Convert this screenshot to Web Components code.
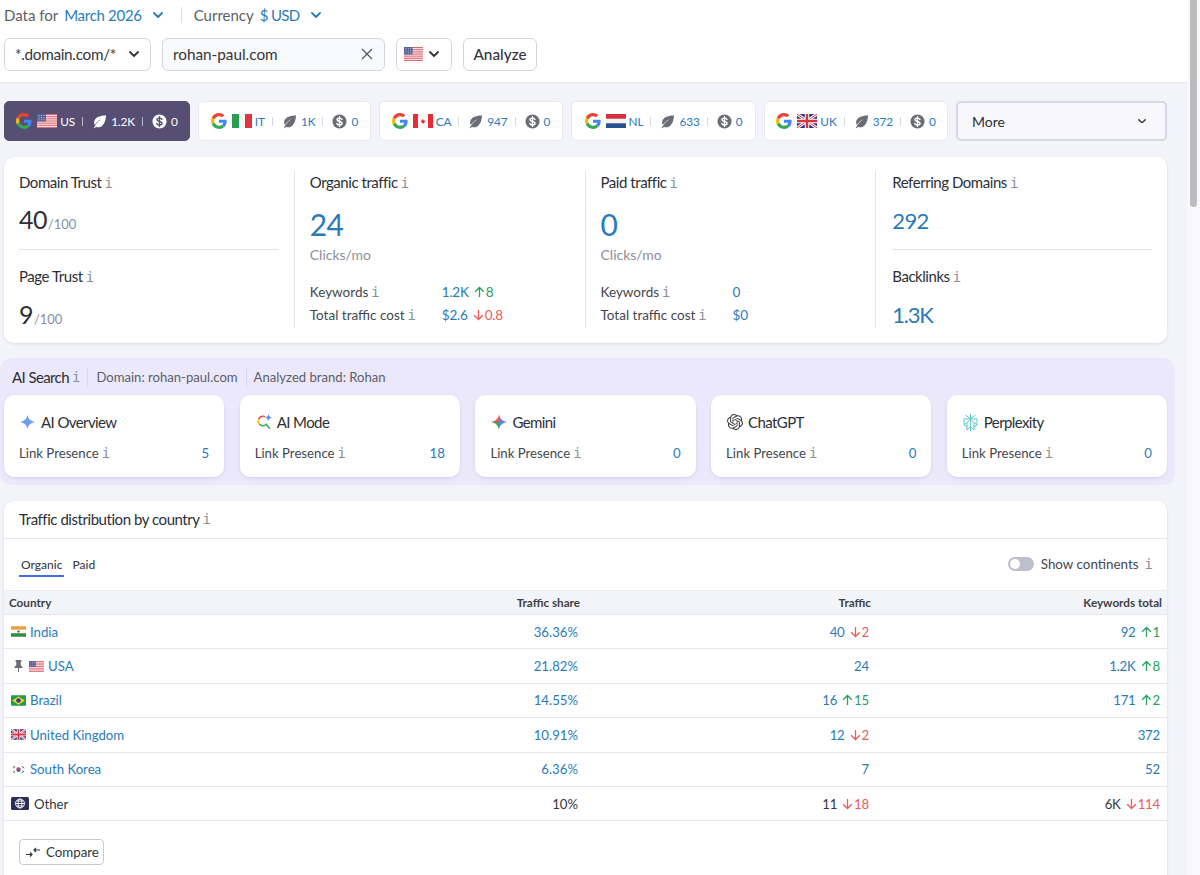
<!DOCTYPE html>
<html lang="en">
<head>
<meta charset="utf-8">
<title>Domain overview</title>
<style>
html,body{margin:0;padding:0;height:875px;overflow:hidden;background:#f3f4f9}
body{font-family:Lato,"Open Sans",sans-serif;color:#2c2f36}
</style>
</head>
<body>
<seo-app></seo-app>
<script>
const FLAGS = {
 us:`<svg viewBox="0 0 20 14" width="W" height="H" preserveAspectRatio="none"><rect width="20" height="14" fill="#f3f1f4"/><g fill="#e2656f"><rect width="20" height="1.1"/><rect y="2.15" width="20" height="1.1"/><rect y="4.3" width="20" height="1.1"/><rect y="6.45" width="20" height="1.1"/><rect y="8.6" width="20" height="1.1"/><rect y="10.75" width="20" height="1.1"/><rect y="12.9" width="20" height="1.1"/></g><rect width="9" height="7.5" fill="#5a6399"/><g fill="#cfd3e6"><circle cx="2" cy="1.6" r=".5"/><circle cx="4.5" cy="1.6" r=".5"/><circle cx="7" cy="1.6" r=".5"/><circle cx="2" cy="3.7" r=".5"/><circle cx="4.5" cy="3.7" r=".5"/><circle cx="7" cy="3.7" r=".5"/><circle cx="2" cy="5.8" r=".5"/><circle cx="4.5" cy="5.8" r=".5"/><circle cx="7" cy="5.8" r=".5"/></g></svg>`,
 it:`<svg viewBox="0 0 20 14" width="W" height="H"><rect width="7" height="14" fill="#2a9d55"/><rect x="7" width="6" height="14" fill="#f6f6f6"/><rect x="13" width="7" height="14" fill="#e0353f"/></svg>`,
 ca:`<svg viewBox="0 0 20 14" width="W" height="H"><rect width="20" height="14" fill="#f7f7f7"/><rect width="5" height="14" fill="#ea2a37"/><rect x="15" width="5" height="14" fill="#ea2a37"/><path d="M10 3l.9 1.8 1-.4-.4 2.4 1.4-.8.4.9 1.1-.2-.4 1.5.5.4-2.6 1.8.2 1H10.400v1.400h-.8V10.900H7.900l.2-1-2.600-1.800.5-.4-.4-1.500 1.100.2.400-.9 1.400.8-.4-2.400 1 .4z" fill="#ea2a37" transform="translate(5 3.500) scale(.5)"/></svg>`,
 nl:`<svg viewBox="0 0 20 14" width="W" height="H"><rect width="20" height="14" fill="#f4f4f6"/><rect width="20" height="4.700" fill="#d2303f"/><rect y="9.300" width="20" height="4.700" fill="#27508f"/></svg>`,
 uk:`<svg viewBox="0 0 20 14" width="W" height="H"><rect width="20" height="14" fill="#29367f"/><path d="M0 0l20 14M20 0L0 14" stroke="#fff" stroke-width="3"/><path d="M0 0l20 14M20 0L0 14" stroke="#d8323f" stroke-width="1"/><path d="M10 0v14M0 7h20" stroke="#fff" stroke-width="4.500"/><path d="M10 0v14M0 7h20" stroke="#d8323f" stroke-width="2.400"/></svg>`,
 in:`<svg viewBox="0 0 20 14" width="W" height="H"><rect width="20" height="4.700" fill="#f39b3c"/><rect y="4.700" width="20" height="4.600" fill="#fbfbfb"/><rect y="9.300" width="20" height="4.700" fill="#2c8f3c"/><circle cx="10" cy="7" r="1.500" fill="#3a4a8c"/></svg>`,
 br:`<svg viewBox="0 0 20 14" width="W" height="H"><rect width="20" height="14" rx="1" fill="#1f9c49"/><path d="M10 1.500L18.500 7 10 12.500 1.500 7z" fill="#f5d327"/><circle cx="10" cy="7" r="3.100" fill="#27408f"/></svg>`,
 kr:`<svg viewBox="0 0 20 14" width="W" height="H"><rect width="20" height="14" fill="#fff"/><path d="M7 7a3 3 0 0 1 6 0z" fill="#d8323f"/><path d="M7 7a3 3 0 0 0 6 0z" fill="#2d4a96"/><g stroke="#333" stroke-width=".9"><path d="M2.500 4.500l2-2.200M3.600 5.400l2-2.200M14.500 2.300l2 2.200M15.500 3.200l2 2.200M2.500 9.500l2 2.200M3.600 8.600l2 2.200M16.500 9.500l-2 2.200M17.500 8.700l-2 2.200"/></g></svg>`
};
const flag=(k,w=20,h=14)=>FLAGS[k].replace('"W"',`"${w}"`).replace('"H"',`"${h}"`);
const GOOGLE=(s=16)=>`<svg viewBox="0 0 48 48" width="${s}" height="${s}" style="display:block;flex:none"><path fill="#EA4335" d="M24 9.500c3.540 0 6.710 1.220 9.210 3.600l6.850-6.850C35.900 2.380 30.470 0 24 0 14.620 0 6.510 5.380 2.560 13.220l7.980 6.190C12.430 13.720 17.740 9.500 24 9.500z"/><path fill="#4285F4" d="M46.980 24.550c0-1.570-.15-3.090-.38-4.550H24v9.020h12.940c-.58 2.960-2.260 5.480-4.780 7.180l7.730 6c4.510-4.180 7.090-10.360 7.090-17.650z"/><path fill="#FBBC05" d="M10.530 28.590c-.48-1.450-.76-2.990-.76-4.590s.27-3.140.76-4.590l-7.980-6.190C.92 16.460 0 20.120 0 24c0 3.880.92 7.540 2.560 10.780l7.970-6.190z"/><path fill="#34A853" d="M24 48c6.480 0 11.930-2.130 15.890-5.810l-7.730-6c-2.150 1.450-4.920 2.300-8.160 2.300-6.260 0-11.570-4.220-13.470-9.910l-7.980 6.190C6.510 42.620 14.620 48 24 48z"/></svg>`;
const LEAF=(c,s=15)=>`<svg viewBox="0 0 16 16" width="${s}" height="${s}" style="display:block;flex:none"><path fill="${c}" d="M15 1.500C9 1.700 4.300 3 2.700 6.700c-.8 1.900-.4 3.700.4 5 1.500-2.600 3.800-4.700 6.700-6.100-2.700 1.900-5 4.300-6.700 7.200L2 14.600l1.100.6.900-1.600c1.400.7 3.500.8 5.300-.1C13.300 11.500 14.500 6.500 15 1.500z"/></svg>`;
const DOLLAR=(bg,fg,s=15)=>`<svg viewBox="0 0 16 16" width="${s}" height="${s}" style="display:block;flex:none"><circle cx="8" cy="8" r="7.500" fill="${bg}"/><path d="M10.700 5.800C10.300 4.800 9.300 4.400 8 4.400c-1.500 0-2.700.7-2.700 1.800 0 2.600 5.500 1.100 5.500 3.700 0 1.100-1.200 1.800-2.800 1.800-1.400 0-2.500-.5-2.900-1.600M8 2.800v10.400" fill="none" stroke="${fg}" stroke-width="1.500" stroke-linecap="round"/></svg>`;
const CHEV=(c,s=10,sw=1.800)=>`<svg viewBox="0 0 10 6" width="${s}" height="${s*.6}" style="display:block;flex:none"><path d="M1 1l4 4 4-4" fill="none" stroke="${c}" stroke-width="${sw}" stroke-linecap="round" stroke-linejoin="round"/></svg>`;
const BLUE='#2b7ab8';

function mk(name, css, html){
  customElements.define(name, class extends HTMLElement{
    connectedCallback(){
      if(this.shadowRoot) return;
      const r=this.attachShadow({mode:'open'});
      r.innerHTML=`<style>${css}</style>`+(typeof html==='function'?html(this):html);
    }
  });
}

mk('info-mark',`:host{display:inline-block;font:14px/1 "DejaVu Sans Mono","Liberation Mono",monospace;color:#8c8f98;letter-spacing:0;margin-left:3px;font-weight:400}`,`i`);

mk('top-bar',`
:host{display:block;background:#fff;border-bottom:1px solid #e3e4ea;height:83px;box-sizing:border-box;padding:0 0 0 4px;font-size:15px}
.a{display:flex;align-items:center;height:30px;color:#5b5f66}
.a b{font-weight:400;color:${BLUE};letter-spacing:-.3px}
.sep{width:1px;height:16px;background:#dfe0e6;margin:0 12px 0 0}
.r{display:flex;align-items:center;height:33px;margin-top:8px;gap:11px}
.box{box-sizing:border-box;height:33px;padding-bottom:1px!important;border:1px solid #d4d6de;border-radius:6px;background:#fff;display:flex;align-items:center;color:#33363c;font-size:15.300px}
.sel{width:147px;padding:0 11px 0 10px;justify-content:space-between;letter-spacing:-.3px}
.inp{width:223px;padding:0 11px 0 10px;justify-content:space-between;background:#f8f9fb}
.fl{width:56px;padding:0 12px 0 7px;justify-content:space-between}
.btn{width:74px;justify-content:center;font-weight:500}
`,()=>`
<div class="a"><span>Data for</span><b style="margin-left:6px">March 2026</b><span style="margin:0 18px 0 11px">${CHEV(BLUE)}</span><span class="sep"></span><span>Currency</span><b style="margin-left:6px;letter-spacing:-.7px">$ USD</b><span style="margin-left:12px">${CHEV(BLUE)}</span></div>
<div class="r">
<div class="box sel"><span>*.domain.com/*</span>${CHEV('#33363c')}</div>
<div class="box inp"><span>rohan-paul.com</span><svg width="12" height="12" viewBox="0 0 12 12"><path d="M1 1l10 10M11 1L1 11" stroke="#55585f" stroke-width="1.300"/></svg></div>
<div class="box fl">${flag('us',19,14)}${CHEV('#33363c')}</div>
<div class="box btn">Analyze</div>
</div>`);

mk('engine-tab',`
:host{display:flex;box-sizing:border-box;height:40px;border:1px solid #e8e9f0;border-radius:5px;background:#fff;align-items:center;justify-content:center;font-size:11.800px;letter-spacing:-.1px;color:${BLUE};white-space:nowrap}
:host([active]){background:#564f73;border-color:#564f73;color:#fff}
.p{width:1px;height:9px;background:#d9dae2;margin:0 9px 0 7px}
:host([active]) .p{background:#b8b5c6}
.f{margin:0 3px 0 5px;display:block}.t{margin-left:4px}.u{margin-left:0}
`,(e)=>{const on=e.hasAttribute('active');const ic=on?'#fff':'#6a6d75';return `
${GOOGLE(16)}<span class="f" style="height:14px">${flag(e.getAttribute('flag'))}</span><span class="u">${e.getAttribute('code')}</span><span class="p"></span>${LEAF(ic)}<span class="t">${e.getAttribute('kw')}</span><span class="p"></span>${DOLLAR(ic,on?'#564f73':'#fff')}<span class="t">0</span>`});

mk('more-tab',`:host{display:flex;box-sizing:border-box;height:40px;border:2px solid #d6d9e5;border-radius:5px;background:#f8f8fc;align-items:center;justify-content:space-between;padding:0 19px 0 14px;font-size:14px;color:#2c2f36}`,()=>`<span>More</span>${CHEV('#33363c',8,1.800)}`);

mk('metric-head',`:host{display:block;font-size:15px;line-height:22px;color:#2c2f36;letter-spacing:-.45px;white-space:nowrap}`,`<slot></slot><info-mark></info-mark>`);

mk('big-value',`
:host{display:block;white-space:nowrap;color:#2c2f36;letter-spacing:-.6px}
:host([blue]){color:${BLUE}}
.v{font-size:var(--fs,25px);line-height:28px}
.m{font-size:13px;color:#8c8f98;margin-left:1px;letter-spacing:0}
`,(e)=>`<span class="v"><slot></slot></span>${e.hasAttribute('max')?`<span class="m">/${e.getAttribute('max')}</span>`:''}`);

mk('metric-row',`
:host{display:grid;grid-template-columns:132px 1fr;font-size:13.500px;line-height:20px;white-space:nowrap;color:#44474e}
.l{display:block}
`,`<span class="l"><slot name="label"></slot><info-mark></info-mark></span><span style="letter-spacing:-.3px"><slot></slot></span>`);

mk('delta-val',`
:host{display:inline-flex;align-items:center;color:${BLUE};white-space:nowrap;letter-spacing:-.2px}
:host([plain]){color:#33363c}
.d{display:inline-flex;align-items:center;margin-left:5px}
.up{color:#27a062}.dn{color:#ea5b5b}
svg{display:block;margin-right:1px}
`,(e)=>{const d=e.getAttribute('delta');let s='';if(d){const up=d[0]==='+';const col=up?'#27a062':'#ea5b5b';s=`<span class="d ${up?'up':'dn'}"><svg width="11" height="12" viewBox="0 0 11 12"><path d="${up?'M5.500 11V1.500M1.200 5.800l4.300-4.300 4.300 4.300':'M5.500 1v9.500M1.200 6.200l4.300 4.300 4.300-4.300'}" fill="none" stroke="${col}" stroke-width="1.300"/></svg>${d.slice(1)}</span>`;}return `<span>${e.getAttribute('value')}</span>${s}`});

mk('stats-card',`
:host{display:grid;grid-template-columns:repeat(4,1fr);box-sizing:border-box;background:#fff;border-radius:10px;margin:0 0 0 4px;width:1163px;height:186px;padding:14px 0 0;box-shadow:0 1px 3px rgba(40,45,80,.12)}
.c{padding:0 15px;height:157px;box-sizing:content-box;border-right:1px solid #e3e4ea}
.c:last-child{border-right:0;padding-left:16px}
hr{border:0;border-top:1px solid #e3e4ea;margin:16px 0 15px}
.g1{margin-top:12px}.g2{margin-top:13px}
.c:last-child .g1{margin-top:14px}
.c:last-child hr{margin-top:14px}
.c:last-child .g2{margin-top:14px}
.big{margin-top:17px;--fs:30px;line-height:36px;height:36px}
.sub{font-size:14px;line-height:18px;margin-top:0;color:#8c8f98}
.k{margin-top:18px}.k2{margin-top:3px}
`,()=>`
<div class="c"><metric-head>Domain Trust</metric-head><big-value class="g1" max="100">40</big-value><hr><metric-head>Page Trust</metric-head><big-value class="g2" max="100">9</big-value></div>
<div class="c"><metric-head>Organic traffic</metric-head><big-value blue class="big">24</big-value><div class="sub">Clicks/mo</div>
<metric-row class="k"><span slot="label">Keywords</span><delta-val value="1.2K" delta="+8"></delta-val></metric-row>
<metric-row class="k2"><span slot="label">Total traffic cost</span><delta-val value="$2.6" delta="-0.8"></delta-val></metric-row></div>
<div class="c"><metric-head>Paid traffic</metric-head><big-value blue class="big">0</big-value><div class="sub">Clicks/mo</div>
<metric-row class="k"><span slot="label">Keywords</span><delta-val value="0"></delta-val></metric-row>
<metric-row class="k2"><span slot="label">Total traffic cost</span><delta-val value="$0"></delta-val></metric-row></div>
<div class="c"><metric-head>Referring Domains</metric-head><big-value blue class="g1" style="--fs:22px">292</big-value><hr><metric-head>Backlinks</metric-head><big-value blue class="g2" style="--fs:22px;letter-spacing:-1.200px">1.3K</big-value></div>`);

const AI_ICONS={
 overview:`<svg width="15" height="16" viewBox="0 0 16 16"><path d="M8 0c.6 4.500 3 7 8 8-5 1-7.400 3.500-8 8-.6-4.500-3-7-8-8 5-1 7.400-3.500 8-8z" fill="#6f9ef5"/></svg>`,
 mode:`<svg width="17" height="17" viewBox="0 0 17 17" fill="none"><path d="M9.200 2.600A5 5 0 0 0 2.700 5" stroke="#ea4335" stroke-width="1.500"/><path d="M2.700 5a5 5 0 0 0 .6 5" stroke="#fbbc05" stroke-width="1.500"/><path d="M3.300 10a5 5 0 0 0 6 1.200" stroke="#34a853" stroke-width="1.500"/><path d="M9.300 11.200l1-.8 3.500 4.400" stroke="#34a853" stroke-width="1.500"/><path d="M12.500 0c.3 2 1.300 3 3.500 3.500-2.200.5-3.200 1.500-3.500 3.500-.3-2-1.300-3-3.500-3.500C11.200 3 12.200 2 12.500 0z" fill="#5b8def"/></svg>`,
 gemini:`<svg width="16" height="16" viewBox="0 0 16 16"><path d="M8 8L0 8c5-1 7.400-3.500 8-8z" fill="#f0584c"/><path d="M8 8l8 0c-5-1-7.400-3.500-8-8z" fill="#7d6ff0"/><path d="M8 8L0 8c5 1 7.400 3.500 8 8z" fill="#3fa15f"/><path d="M8 8l8 0c-5 1-7.400 3.500-8 8z" fill="#3d8ff5"/></svg>`,
 gpt:`<svg width="16" height="16" viewBox="0 0 24 24"><path fill="#3a3c42" d="M22.2819 9.8211a5.9847 5.9847 0 0 0-.5157-4.9108 6.0462 6.0462 0 0 0-6.5098-2.9A6.0651 6.0651 0 0 0 4.9807 4.1818a5.9847 5.9847 0 0 0-3.9977 2.9 6.0462 6.0462 0 0 0 .7427 7.0966 5.98 5.98 0 0 0 .511 4.9107 6.051 6.051 0 0 0 6.5146 2.9001A5.9847 5.9847 0 0 0 13.2599 24a6.0557 6.0557 0 0 0 5.7718-4.2058 5.9894 5.9894 0 0 0 3.9977-2.9001 6.0557 6.0557 0 0 0-.7475-7.0729zm-9.022 12.6081a4.4755 4.4755 0 0 1-2.8764-1.0408l.1419-.0804 4.7783-2.7582a.7948.7948 0 0 0 .3927-.6813v-6.7369l2.02 1.1686a.071.071 0 0 1 .038.052v5.5826a4.504 4.504 0 0 1-4.4945 4.4944zm-9.6607-4.1254a4.4708 4.4708 0 0 1-.5346-3.0137l.142.0852 4.783 2.7582a.7712.7712 0 0 0 .7806 0l5.8428-3.3685v2.3324a.0804.0804 0 0 1-.0332.0615L9.74 19.9502a4.4992 4.4992 0 0 1-6.1408-1.6464zM2.3408 7.8956a4.485 4.485 0 0 1 2.3655-1.9728V11.6a.7664.7664 0 0 0 .3879.6765l5.8144 3.3543-2.0201 1.1685a.0757.0757 0 0 1-.071 0l-4.8303-2.7865A4.504 4.504 0 0 1 2.3408 7.872zm16.5963 3.8558L13.1038 8.364 15.1192 7.2a.0757.0757 0 0 1 .071 0l4.8303 2.7913a4.4944 4.4944 0 0 1-.6765 8.1042v-5.6772a.79.79 0 0 0-.407-.667zm2.0107-3.0231l-.142-.0852-4.7735-2.7818a.7759.7759 0 0 0-.7854 0L9.409 9.2297V6.8974a.0662.0662 0 0 1 .0284-.0615l4.8303-2.7866a4.4992 4.4992 0 0 1 6.6802 4.66zM8.3065 12.863l-2.02-1.1638a.0804.0804 0 0 1-.038-.0567V6.0742a4.4992 4.4992 0 0 1 7.3757-3.4537l-.142.0805L8.704 5.459a.7948.7948 0 0 0-.3927.6813zm1.0976-2.3654l2.602-1.4998 2.6069 1.4998v2.9994l-2.5974 1.4997-2.6067-1.4997Z"/></svg>`,
 perp:`<svg width="15" height="17" viewBox="0 0 15 17" fill="none" stroke="#62c6cf" stroke-width="1"><path d="M7.500 0v17M1 4.800h13M1 4.800v6l3-2.300M14 4.800v6l-3-2.300M2.500 1l5 3.800 5-3.800M4 16v-6.800l3.500-4.400 3.500 4.400V16l-3.500-3.300L4 16zM1 10.800l3 2M14 10.800l-3 2"/></svg>`
};
mk('ai-card',`
:host{display:block;box-sizing:border-box;height:82px;background:#fff;border-radius:10px;padding:16px 15px 0;box-shadow:0 1px 3px rgba(60,50,110,.14)}
.t{display:flex;align-items:center;height:22px;font-size:15px;letter-spacing:-.6px;color:#2c2f36}
.t span.ic{display:block;width:16px;height:17px;margin:0 5px 0 1px}
.l{display:flex;justify-content:space-between;margin-top:10px;font-size:13.200px;line-height:20px;color:#44474e}
.v{color:${BLUE}}
`,(e)=>`<div class="t"><span class="ic">${AI_ICONS[e.getAttribute('icon')]}</span><span><slot></slot></span></div><div class="l"><span>Link Presence<info-mark></info-mark></span><span class="v">${e.getAttribute('value')}</span></div>`);

mk('ai-section',`
:host{display:block;width:1175px;box-sizing:border-box;background:#ece8fb;border-radius:12px;padding:7px 8px 8px 4px}
.h{display:flex;align-items:center;height:24px;padding-left:8px;font-size:13.100px;color:#5b5f66;white-space:nowrap}
.h strong{font-weight:400;font-size:15px;letter-spacing:-.6px;color:#2c2f36}
.s{width:1px;height:20px;background:#d9d5ee;margin:0 7px}
.g{display:grid;grid-template-columns:repeat(5,1fr);gap:15.500px;margin-top:6px}
`,`
<div class="h"><strong>AI Search</strong><info-mark></info-mark><span class="s" style="margin-left:7px;margin-right:8px"></span><span>Domain: rohan-paul.com</span><span class="s" style="margin-left:8px"></span><span>Analyzed brand: Rohan</span></div>
<div class="g">
<ai-card icon="overview" value="5">AI Overview</ai-card>
<ai-card icon="mode" value="18">AI Mode</ai-card>
<ai-card icon="gemini" value="0">Gemini</ai-card>
<ai-card icon="gpt" value="0">ChatGPT</ai-card>
<ai-card icon="perp" value="0">Perplexity</ai-card>
</div>`);

const ROWCSS=`:host{display:grid;grid-template-columns:1fr 291px 291px 291px;box-sizing:border-box;padding:0 5px;align-items:center}`;
mk('table-head',ROWCSS+`
:host{height:25px;padding-bottom:1px;background:#f3f4f8;border-top:1px solid #ebecf1;border-bottom:1px solid #e6e7ee;font-size:11.700px;font-weight:700;color:#3c3f46}
span{text-align:right}span:first-of-type{text-align:left}
`,`<span>Country</span><span>Traffic share</span><span>Traffic</span><span>Keywords total</span>`);

mk('country-row',ROWCSS+`
:host{height:34.400px;border-bottom:1px solid #e6e7ee;font-size:13.200px;color:${BLUE}}
.n{display:flex;align-items:center;padding-left:2px;white-space:nowrap}
.n svg{display:block;margin-right:4px}
.r{display:block;text-align:right;padding-right:2px}
:host([plain]){color:#33363c}
`,(e)=>{
 const f=e.getAttribute('flag');
 const pin=e.hasAttribute('pinned')?`<svg width="9" height="12" viewBox="0 0 9 12" style="margin:0 6px 0 3px"><path d="M1.500 0h6v1.200L6.700 2v3l1.800 2v1H5v4H4V8H.5V7l1.800-2V2l-.8-.8z" fill="#6a6d75"/></svg>`:'';
 const g=f==='globe'?`<svg width="18" height="13" viewBox="0 0 18 13" style="margin-right:5px"><rect width="18" height="13" rx="1.500" fill="#2b2f57"/><g fill="none" stroke="#fff" stroke-width=".9"><circle cx="9" cy="6.500" r="4.500"/><ellipse cx="9" cy="6.500" rx="2" ry="4.500"/><path d="M4.500 6.500h9M5.300 4h7.400M5.300 9h7.400"/></g></svg>`:flag(f,15,11);
 return `<span class="n">${pin}${g}<slot name="name"></slot></span><span class="r"><slot name="share"></slot></span><span class="r"><slot name="traffic"></slot></span><span class="r"><slot name="kw"></slot></span>`});

mk('traffic-card',`
:host{display:block;width:1163px;margin-left:4px;background:#fff;border-radius:10px 10px 0 0;box-shadow:0 1px 3px rgba(40,45,80,.12);height:400px}
.h{height:38px;box-sizing:border-box;display:flex;align-items:center;padding:0 0 1px 15px;border-bottom:1px solid #e6e7ee;font-size:15px;letter-spacing:-.45px;color:#2c2f36}
.bar{height:51px;box-sizing:border-box;display:flex;align-items:flex-start;justify-content:space-between;padding:18px 14px 0 15px}
.tabs{display:flex;font-size:12px;font-weight:500;color:#3c3f46}
.tabs span{display:block;padding:0 2px 2px;line-height:16px;margin-right:6px}
.tabs .on{border-bottom:2px solid #3f6fe0}
.sw{display:flex;align-items:center;font-size:13.400px;color:#44474e;height:16px;margin-top:-1px}
.tg{width:26px;height:14px;border-radius:7px;background:#bdbfcb;position:relative;margin-right:7px}
.tg::after{content:"";position:absolute;left:2px;top:2px;width:10px;height:10px;border-radius:50%;background:#fff}
.sw info-mark{margin-left:6px}
.btn{display:inline-flex;align-items:center;box-sizing:border-box;height:26px;width:85px;margin:18px 0 0 15px;border:1px solid #c9ccd6;border-radius:4px;font-size:13.300px;color:#33363c;padding-left:6px}
.btn svg{margin-right:6px}
`,()=>{
 const rows=[
  ['in','India','36.36%',['40','-2'],['92','+1']],
  ['us','USA','21.82%',['24'],['1.2K','+8'],1],
  ['br','Brazil','14.55%',['16','+15'],['171','+2']],
  ['uk','United Kingdom','10.91%',['12','-2'],['372']],
  ['kr','South Korea','6.36%',['7'],['52']],
 ];
 const dv=(a,p)=>`<delta-val ${p?'plain':''} value="${a[0]}" ${a[1]?`delta="${a[1]}"`:''}></delta-val>`;
 return `<div class="h"><span>Traffic distribution by country</span><info-mark></info-mark></div>
 <div class="bar"><div class="tabs"><span class="on">Organic</span><span>Paid</span></div><div class="sw"><span class="tg"></span><span>Show continents</span><info-mark></info-mark></div></div>
 <table-head></table-head>
 ${rows.map(r=>`<country-row flag="${r[0]}" ${r[5]?'pinned':''}><span slot="name">${r[1]}</span><span slot="share">${r[2]}</span><span slot="traffic">${dv(r[3])}</span><span slot="kw">${dv(r[4])}</span></country-row>`).join('')}
 <country-row flag="globe" plain><span slot="name">Other</span><span slot="share">10%</span><span slot="traffic">${dv(['11','-18'],1)}</span><span slot="kw">${dv(['6K','-114'],1)}</span></country-row>
 <div class="btn"><svg width="14" height="11" viewBox="0 0 14 11" fill="none" stroke="#33363c" stroke-width="1.200"><path d="M0 7.500h6M4 5.500l2 2-2 2M14 3H8M10 1L8 3l2 2"/></svg>Compare</div>`});

mk('fake-scrollbar',`:host{display:block;width:13px;height:875px;background:#f9f9fb;flex:none}
.t{width:7px;height:207px;margin-left:3px;background:#bcbcbf;border-radius:0 0 4px 4px}`,`<div class="t"></div>`);

mk('seo-app',`
:host{display:flex;width:1200px;height:875px;overflow:hidden}
main{width:1187px;flex:none;background:#f3f4f9}
.tabs{display:grid;grid-template-columns:186px 173px 184px 185px 184px 211px;gap:8px;margin:18px 0 16px 4px;width:1163px}
ai-section{margin-top:15px}
traffic-card{margin-top:16px}
`,`
<main>
<top-bar></top-bar>
<div class="tabs">
<engine-tab active flag="us" code="US" kw="1.2K"></engine-tab>
<engine-tab flag="it" code="IT" kw="1K"></engine-tab>
<engine-tab flag="ca" code="CA" kw="947"></engine-tab>
<engine-tab flag="nl" code="NL" kw="633"></engine-tab>
<engine-tab flag="uk" code="UK" kw="372"></engine-tab>
<more-tab></more-tab>
</div>
<stats-card></stats-card>
<ai-section></ai-section>
<traffic-card></traffic-card>
</main>
<fake-scrollbar></fake-scrollbar>`);
</script>
</body>
</html>
